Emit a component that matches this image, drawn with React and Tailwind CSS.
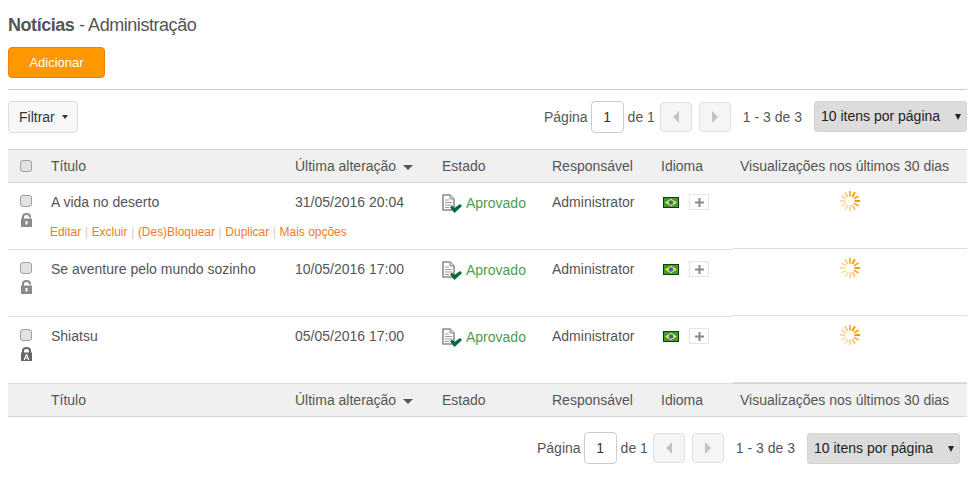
import React from "react";

const COLS = "grid grid-cols-[35px_244px_147px_110px_109px_80px_234px]";

const rows = [
  { title: "A vida no deserto", date: "31/05/2016 20:04", lock: "open", actions: true },
  { title: "Se aventure pelo mundo sozinho", date: "10/05/2016 17:00", lock: "open" },
  { title: "Shiatsu", date: "05/05/2016 17:00", lock: "auto" },
];

const Checkbox = () => (
  <span className="block w-[12px] h-[12px] rounded-[3px] border border-[#a0a0a0] bg-[#e2e2e2]" />
);

const Lock = ({ type }) => (
  <svg width="11" height="14" viewBox="0 0 11 14" className="block ml-px">
    <path
      d={type === "open" ? "M2 6V3.6C2 1.9 3.5 1 5.5 1S9 1.9 9 3.6V4.5" : "M2 6V3.6C2 1.9 3.5 1 5.5 1S9 1.9 9 3.6V6"}
      fill="none"
      stroke={type === "open" ? "#8a8a8a" : "#666"}
      strokeWidth="2"
    />
    <rect y="5.5" width="11" height="8.5" fill={type === "open" ? "#8a8a8a" : "#666"} />
    {type === "open" ? (
      <rect x="4.5" y="8" width="2" height="3.5" fill="#fff" />
    ) : (
      <path d="M2.7 13 4.7 7.2h1.6l2 5.8H7l-.4-1.4H4.4L4 13zM4.7 10.6h1.6l-.8-2.2z" fill="#fff" />
    )}
  </svg>
);

const DocCheck = () => (
  <svg width="22" height="20" viewBox="0 0 22 20" className="block shrink-0 mt-px">
    <path d="M1 1h7l4 4v11H1z" fill="#fff" stroke="#8c8c8c" strokeWidth="1.6" />
    <path d="M8 1v4h4" fill="#ddd" stroke="#8c8c8c" strokeWidth="1" />
    <path d="M3 6h4M3 8.5h7M3 11h7M3 13.5h4" stroke="#999" strokeWidth="1" />
    <path d="M8 13.5 10 11.5 12.5 14 18 10 20 12 12.5 19z" fill="#046a38" />
  </svg>
);

const Flag = () => (
  <svg width="16" height="11" viewBox="0 0 16 11" className="block">
    <rect width="16" height="11" fill="#0a3d12" />
    <rect x="1" y="1" width="14" height="9" fill="#3f9a3c" />
    <path d="M8 1.7 14 5.5 8 9.3 2 5.5z" fill="#f1e83a" />
    <circle cx="8" cy="5.5" r="2.3" fill="#3560c8" />
  </svg>
);

const Spinner = () => {
  const bars = [
    [0, 0.75], [30, 1], [60, 0.85], [90, 1], [120, 0.8], [150, 0.55],
    [180, 0.4], [210, 0.3], [240, 0.3], [270, 0.35], [300, 0.4], [330, 0.5],
  ];
  return (
    <svg width="20" height="20" viewBox="0 0 20 20" className="block">
      {bars.map(([angle, opacity]) => (
        <rect
          key={angle}
          x="9"
          y="0"
          width="2"
          height="5.5"
          fill="#ff9800"
          opacity={opacity}
          transform={`rotate(${angle} 10 10)`}
        />
      ))}
    </svg>
  );
};

const Arrow = ({ dir }) => (
  <svg width="6" height="12" viewBox="0 0 6 12">
    <path d={dir === "left" ? "M6 0v12L0 6z" : "M0 0v12l6-6z"} fill="#c4c4c4" />
  </svg>
);

const Pager = ({ bottom }) => (
  <div className="flex items-center h-[32px] text-[14px] text-[#555]">
    <span>Página</span>
    <span className="ml-[3px] w-[33px] h-[32px] flex items-center justify-center rounded-[4px] border border-[#ccc] bg-white text-[#333]">
      1
    </span>
    <span className="ml-[4px]">de 1</span>
    <span className="ml-[5px] w-[32px] h-[30px] mb-[1px] flex items-center justify-center rounded-[4px] border border-[#e0e0e0] bg-[#f5f5f5]">
      <Arrow dir="left" />
    </span>
    <span className="ml-[7px] w-[32px] h-[30px] mb-[1px] flex items-center justify-center rounded-[4px] border border-[#e0e0e0] bg-[#f5f5f5]">
      <Arrow dir="right" />
    </span>
    <span className="ml-[12px]">1 - 3 de 3</span>
    <span
      className={`ml-[12px] w-[153px] h-[31px] pl-[6px] pr-[5px] flex items-center justify-between rounded-[3px] border border-[#d4d4d4] bg-[#dcdcdc] text-[#222] ${
        bottom ? "mt-[1px]" : "mb-[1px]"
      }`}
    >
      10 itens por página
      <span className="w-0 h-0 border-x-[3px] border-t-[6px] border-x-transparent border-t-[#222]" />
    </span>
  </div>
);

const HeadRow = ({ showCheck, className }) => (
  <div className={`${COLS} h-[34px] items-center bg-[#f0f0f0] border-y border-[#d4d4d4] text-[14px] text-[#555] ${className}`}>
    <div className="pl-[12px]">{showCheck && <Checkbox />}</div>
    <div className="px-[8px]">Título</div>
    <div className="px-[8px] flex items-center gap-[7px]">
      Última alteração
      <span className="w-0 h-0 mt-[2px] border-x-[5px] border-t-[5px] border-x-transparent border-t-[#555]" />
    </div>
    <div className="px-[8px]">Estado</div>
    <div className="px-[8px]">Responsável</div>
    <div className="px-[8px]">Idioma</div>
    <div className="px-[7px]">Visualizações nos últimos 30 dias</div>
  </div>
);

const Actions = () => {
  const items = ["Editar", "Excluir", "(Des)Bloquear", "Duplicar", "Mais opções"];
  return (
    <div className="flex mt-[11px] -ml-px text-[12px] tracking-[-0.03px] text-[#f47b20] whitespace-nowrap">
      {items.map((item, i) => (
        <span key={item}>
          {i > 0 && <span className="text-[#ccc] mx-[3.7px]">|</span>}
          {item}
        </span>
      ))}
    </div>
  );
};

const Row = ({ row }) => (
  <div className={`${COLS} h-[67px] text-[14px] text-[#555]`}>
    <div className="pl-[12px] pt-[12px] border-b border-[#dcdcdc] flex flex-col gap-[6px]">
      <Checkbox />
      <Lock type={row.lock} />
    </div>
    <div className="px-[8px] pt-[9px] border-b border-[#dcdcdc]">
      <div className="h-[20px] leading-[20px] whitespace-nowrap">{row.title}</div>
      {row.actions && <Actions />}
    </div>
    <div className="px-[8px] pt-[9px] leading-[20px] border-b border-[#dcdcdc]">{row.date}</div>
    <div className="px-[8px] pt-[10px] border-b border-[#dcdcdc]">
      <div className="flex items-start gap-[2px] text-[#4b9e50] leading-[20px]">
        <DocCheck />
        <span>Aprovado</span>
      </div>
    </div>
    <div className="px-[8px] pt-[9px] leading-[20px] border-b border-[#dcdcdc]">Administrator</div>
    <div className="pl-[10px] pt-[11px] border-b border-[#dcdcdc] flex items-start gap-[10px]">
      <span className="mt-[3px]"><Flag /></span>
      <span className="w-[20px] h-[16px] flex items-center justify-center border border-[#e4e4e4] text-[#888]">
        <svg width="9" height="9" viewBox="0 0 9 9">
          <path d="M3.5 0h2v3.5H9v2H5.5V9h-2V5.5H0v-2h3.5z" fill="#888" />
        </svg>
      </span>
    </div>
    <div className="h-[66px] pt-[8px] border-b border-[#dcdcdc] flex justify-center">
      <Spinner />
    </div>
  </div>
);

export default function App() {
  return (
    <div className="w-[975px] h-[493px] bg-white px-[8px] overflow-hidden font-['Liberation_Sans',Arial,sans-serif]">
      <h1 className="pt-[15px] h-[47px] text-[18px] leading-[20px] tracking-[-0.45px] text-[#555]">
        <b className="font-bold">Notícias</b> - Administração
      </h1>
      <button className="block w-[97px] h-[31px] rounded-[4px] border border-[#f57c00] bg-[#ff9800] text-[13px] text-white">
        Adicionar
      </button>
      <div className="mt-[11px] border-t border-[#ccc]" />
      <div className="mt-[11px] flex justify-between items-start">
        <button className="w-[70px] h-[32px] flex items-center gap-[7px] pl-[10px] rounded-[4px] border border-[#dcdcdc] bg-[#f7f7f7] text-[14px] text-[#333]">
          Filtrar
          <span className="w-0 h-0 border-x-[3px] border-t-[4px] border-x-transparent border-t-[#333]" />
        </button>
        <Pager />
      </div>
      <HeadRow showCheck className="mt-[16px]" />
      {rows.map((row) => (
        <Row key={row.title} row={row} />
      ))}
      <HeadRow className="-mt-px" />
      <div className="mt-[15px] pr-[7px] flex justify-end">
        <Pager bottom />
      </div>
    </div>
  );
}
